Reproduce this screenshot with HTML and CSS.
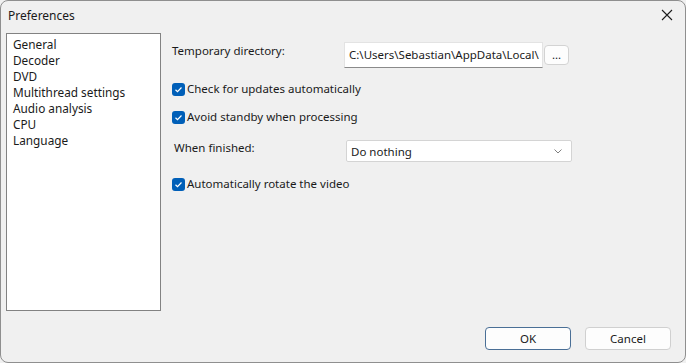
FILE: index.html
```html
<!DOCTYPE html>
<html>
<head>
<meta charset="utf-8">
<link rel="stylesheet" href="styles.css">
</head>
<body>
<div class="window">
  <div class="titlebar">
    <span class="title">Preferences</span>
    <svg class="close" width="12" height="12" viewBox="0 0 12 12"><path d="M1 1 L11 11 M11 1 L1 11" stroke="#1c1c1c" stroke-width="1.1" fill="none"/></svg>
  </div>
  <div class="main">
    <ul class="list">
      <li>General</li>
      <li>Decoder</li>
      <li>DVD</li>
      <li>Multithread settings</li>
      <li>Audio analysis</li>
      <li>CPU</li>
      <li>Language</li>
    </ul>
    <div class="panel">
      <div class="row row-dir">
        <span class="label">Temporary directory:</span>
        <div class="textbox">C:\Users\Sebastian\AppData\Local\</div>
        <div class="browse">...</div>
      </div>
      <div class="check c1"><span class="box"><svg width="13" height="13" viewBox="0 0 13 13"><path d="M3.5 6.8 L5.5 8.7 L9.5 4.5" stroke="#fff" stroke-width="1.2" fill="none"/></svg></span>Check for updates automatically</div>
      <div class="check c2"><span class="box"><svg width="13" height="13" viewBox="0 0 13 13"><path d="M3.5 6.8 L5.5 8.7 L9.5 4.5" stroke="#fff" stroke-width="1.2" fill="none"/></svg></span>Avoid standby when processing</div>
      <div class="row row-fin">
        <span class="label label-fin">When finished:</span>
        <div class="combo"><span>Do nothing</span><svg width="8" height="5" viewBox="0 0 8 5"><path d="M0.5 0.5 L4 4 L7.5 0.5" stroke="#808080" stroke-width="1" fill="none"/></svg></div>
      </div>
      <div class="check c3"><span class="box"><svg width="13" height="13" viewBox="0 0 13 13"><path d="M3.5 6.8 L5.5 8.7 L9.5 4.5" stroke="#fff" stroke-width="1.2" fill="none"/></svg></span>Automatically rotate the video</div>
    </div>
  </div>
  <div class="footer">
    <div class="btn btn-default">OK</div>
    <div class="btn">Cancel</div>
  </div>
</div>
</body>
</html>
```
FILE: styles.css
```css
html, body {
  margin: 0;
  padding: 0;
  background: #f0f0f0;
}
body {
  font-family: "Noto Sans", "Open Sans", sans-serif;
  font-size: 11.5px;
  color: #1a1a1a;
}
.window {
  width: 686px;
  height: 363px;
  box-sizing: border-box;
  border: 1px solid #8f8f8f;
  border-radius: 8px;
  background: #f0f0f0;
  display: flex;
  flex-direction: column;
  overflow: hidden;
}
.titlebar {
  height: 32px;
  flex: none;
  display: flex;
  align-items: center;
  justify-content: space-between;
  padding: 0 12px 0 7px;
  box-sizing: border-box;
}
.title {
  font-size: 12px;
  margin-top: -3px;
}
.close {
  margin-top: -4px;
}
.main {
  height: 278px;
  flex: none;
  display: flex;
  padding-left: 5px;
}
.list {
  width: 155px;
  height: 278px;
  box-sizing: border-box;
  margin: 0;
  padding: 2px 0 0 6px;
  list-style: none;
  background: #fff;
  border: 1px solid #828282;
  font-size: 11.8px;
}
.list li {
  line-height: 16px;
  height: 16px;
}
.panel {
  margin-left: 11px;
  padding-top: 9px;
  display: flex;
  flex-direction: column;
}
.row {
  display: flex;
  align-items: flex-start;
}
.label {
  width: 172px;
  line-height: 16px;
  margin-top: 1px;
  flex: none;
}
.label-fin {
  padding-left: 2px;
  width: 171px;
  margin-top: 0;
}
.textbox {
  width: 199px;
  height: 26px;
  box-sizing: border-box;
  background: #fff;
  border: 1px solid #e3e3e3;
  border-bottom: 1px solid #8a8a8a;
  padding-left: 4px;
  line-height: 24px;
  white-space: nowrap;
  overflow: hidden;
}
.browse {
  width: 25px;
  height: 20px;
  box-sizing: border-box;
  margin: 3px 0 0 1px;
  background: #fdfdfd;
  border: 1px solid #d3d3d3;
  border-radius: 4px;
  text-align: center;
  line-height: 17px;
}
.check {
  display: flex;
  align-items: center;
  height: 16px;
  line-height: 16px;
}
.c1 { margin-top: 13px; }
.c2 { margin-top: 12px; }
.c3 { margin-top: 14px; }
.row-fin { margin-top: 15px; }
.box {
  width: 13px;
  height: 13px;
  border-radius: 3px;
  background: #005fb8;
  margin-right: 2px;
  display: flex;
}
.combo {
  width: 226px;
  height: 22px;
  box-sizing: border-box;
  margin-left: 1px;
  background: #fff;
  border: 1px solid #d4d4d4;
  border-radius: 2px;
  display: flex;
  align-items: center;
  justify-content: space-between;
  padding: 0 9px 0 4px;
}
.footer {
  flex: 1;
  display: flex;
  justify-content: flex-end;
  align-items: flex-start;
  padding: 16px 14px 0 0;
  gap: 14px;
}
.btn {
  width: 86px;
  height: 23px;
  box-sizing: border-box;
  background: #fdfdfd;
  border: 1px solid #d0d0d0;
  border-radius: 4px;
  text-align: center;
  line-height: 21px;
}
.btn-default {
  border-color: #4a6f96;
}
```
